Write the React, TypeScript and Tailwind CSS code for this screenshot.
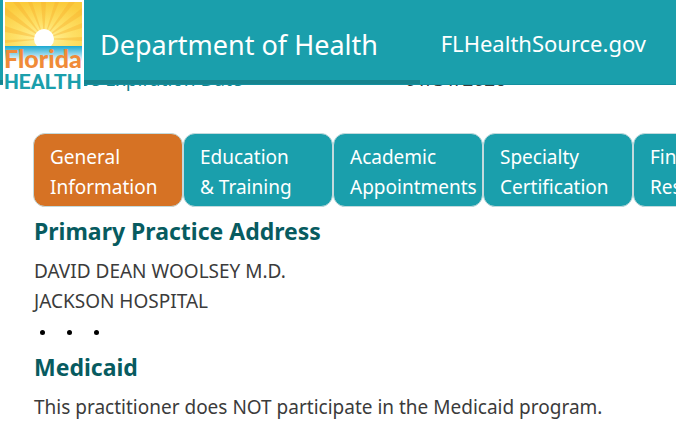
const tabs = [
  { id: "general", lines: ["General", "Information"] },
  { id: "education", lines: ["Education", "& Training"] },
  { id: "academic", lines: ["Academic", "Appointments"] },
  { id: "specialty", lines: ["Specialty", "Certification"] },
  { id: "financial", lines: ["Financial", "Responsibility"] },
];

const rays = [
  "M39 37 L0 30 L0 24 Z",
  "M39 37 L0 13 L0 5 Z",
  "M39 37 L8 0 L14 0 Z",
  "M39 37 L23 0 L27 0 Z",
  "M39 37 L36 0 L41 0 Z",
  "M39 37 L50 0 L54 0 Z",
  "M39 37 L64 0 L70 0 Z",
  "M39 37 L77 6 L77 13 Z",
  "M39 37 L77 21 L77 26 Z",
  "M39 37 L77 35 L77 39 Z",
  "M39 37 L0 38 L0 41 Z",
];

function Logo() {
  return (
    <svg
      viewBox="0 0 81 91"
      className="h-[91px] w-[81px] shrink-0"
      role="img"
      aria-label="Florida Health"
    >
      <defs>
        <radialGradient id="sky" cx="50%" cy="85%" r="85%">
          <stop offset="0" stopColor="#fff3a0" />
          <stop offset="0.45" stopColor="#fee066" />
          <stop offset="1" stopColor="#fbcb3c" />
        </radialGradient>
        <linearGradient id="sea" x1="0" y1="0" x2="0" y2="1">
          <stop offset="0" stopColor="#1ba9d2" />
          <stop offset="0.7" stopColor="#ffffff" />
        </linearGradient>
      </defs>
      <rect width="81" height="91" fill="#fff" />
      <g transform="translate(2 2)">
        <rect width="77" height="44" fill="url(#sky)" />
        {rays.map((d) => (
          <path key={d} d={d} fill="#f8b02c" opacity="0.4" />
        ))}
        <circle cx="39" cy="37" r="10" fill="#fff" />
        <rect y="44" width="77" height="22" fill="url(#sea)" />
      </g>
      <text
        x="1"
        y="68"
        fontFamily="Lato, sans-serif"
        fontSize="25"
        fontWeight="900"
        fill="#f08b38"
      >
        Florida
      </text>
      <text
        x="1"
        y="89"
        fontFamily="Roboto, sans-serif"
        fontSize="21"
        fontWeight="700"
        fill="#1b9fac"
      >
        HEALTH
      </text>
    </svg>
  );
}

function Header() {
  return (
    <header className="relative z-10 h-[85px] border-b border-[#1390a0] bg-[#1a9fac] text-white">
      <div className="absolute bottom-0 left-0 h-1 w-[420px] bg-[#16838e]" />
      <div className="relative flex items-start pl-[3px]">
        <Logo />
        <span className="ml-4 pt-6 text-[27px] leading-[42px] whitespace-nowrap">
          Department of Health
        </span>
        <a
          href="#source"
          className="mr-[30px] ml-auto pt-[22px] text-[22px] leading-[42px]"
        >
          FLHealthSource.gov
        </a>
      </div>
    </header>
  );
}

export default function App() {
  return (
    <div className="overflow-x-hidden bg-white pb-2 font-['Noto_Sans',sans-serif] text-[19px] text-[#3b3b3b]">
      <Header />

      {/* record row scrolled under the header */}
      <dl className="-mt-[21px] flex pl-[34px] leading-[30px]">
        <dt className="w-[371px] text-[#16838e]">License Expiration Date</dt>
        <dd>01/31/2026</dd>
      </dl>

      <nav className="mt-[39px] flex pl-[33px]">
        {tabs.map((tab, i) => (
          <button
            key={tab.id}
            type="button"
            className={`h-[74px] w-[150px] shrink-0 rounded-xl border border-[#c3dadd] pt-1 pl-4 text-left leading-[30px] whitespace-nowrap text-white ${
              i === 0 ? "bg-[#d67224]" : "bg-[#1a9fac]"
            }`}
          >
            {tab.lines[0]}
            <br />
            {tab.lines[1]}
          </button>
        ))}
      </nav>

      <main className="px-[34px]">
        <h2 className="mt-[7px] text-[23px] leading-[34px] font-bold text-[#075b60]">
          Primary Practice Address
        </h2>
        <p className="mt-2 leading-[30px]">
          DAVID DEAN WOOLSEY M.D.
          <br />
          JACKSON HOSPITAL
        </p>
        <div className="flex h-8 items-center gap-[22px] pl-1.5">
          <span className="size-[5px] rounded-full bg-black" />
          <span className="size-[5px] rounded-full bg-black" />
          <span className="size-[5px] rounded-full bg-black" />
        </div>
        <h2 className="mt-0.5 text-[23px] leading-[34px] font-bold text-[#075b60]">
          Medicaid
        </h2>
        <p className="mt-2 leading-[30px]">
          This practitioner does NOT participate in the Medicaid program.
        </p>
      </main>
    </div>
  );
}
